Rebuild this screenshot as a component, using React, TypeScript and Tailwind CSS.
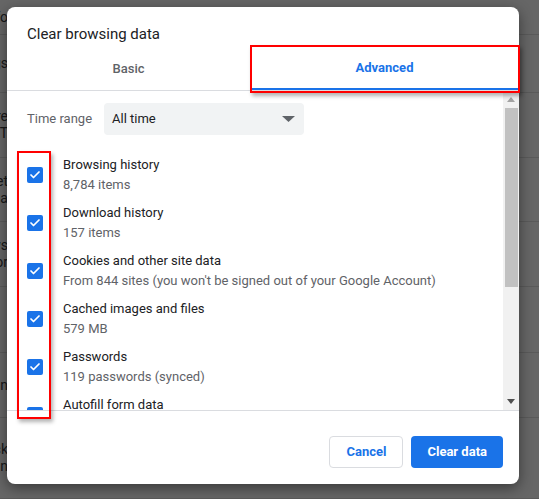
import { Check } from "lucide-react";

// Settings rows sitting behind the dialog; only the tail of each label shows
const pageRows = [
  { h: "h-[35px]", lines: ["Info"] },
  { h: "h-[58px]", lines: ["Settings"] },
  { h: "h-[65px]", lines: ["Privacy and secure", "SITE AUDIT"] },
  { h: "h-[64px]", lines: ["Reset", "Manage sites china"] },
  { h: "h-[65px]", lines: ["Browse windows", "Keep tabs for editor"] },
  { h: "h-[66px]", lines: [] },
  { h: "h-[65px]", lines: ["Sign In"] },
  { h: "flex-1", lines: ["Quick check", "Logged In"] },
];

const dataTypes = [
  { title: "Browsing history", detail: "8,784 items" },
  { title: "Download history", detail: "157 items" },
  {
    title: "Cookies and other site data",
    detail: "From 844 sites (you won't be signed out of your Google Account)",
  },
  { title: "Cached images and files", detail: "579 MB" },
  { title: "Passwords", detail: "119 passwords (synced)" },
  { title: "Autofill form data", detail: "3 addresses, 12 other suggestions" },
  { title: "Site settings", detail: "12 sites" },
];

function Checkbox() {
  return (
    <div className="flex h-4 w-4 shrink-0 items-center justify-center rounded-[2px] bg-[#1a73e8]">
      <Check className="h-3 w-3 text-white" strokeWidth={3.5} />
    </div>
  );
}

function Scrollbar() {
  return (
    <div className="flex w-[16px] shrink-0 flex-col items-center bg-[#f1f1f1]">
      <div className="flex h-[17px] items-center justify-center">
        <svg width="8" height="5" viewBox="0 0 8 5">
          <path d="M4 0 L8 5 L0 5 Z" fill="#a3a3a3" />
        </svg>
      </div>
      <div className="h-[179px] w-[13px] bg-[#c1c1c1]" />
      <div className="flex-1" />
      <div className="flex h-[17px] items-center justify-center">
        <svg width="8" height="5" viewBox="0 0 8 5">
          <path d="M0 0 L8 0 L4 5 Z" fill="#505050" />
        </svg>
      </div>
    </div>
  );
}

export default function App() {
  return (
    <div className="relative h-[499px] w-[539px] overflow-hidden bg-white font-['Roboto',sans-serif]">
      {/* Page underneath */}
      <div className="flex h-full flex-col">
        {pageRows.map((row, i) => (
          <div
            key={i}
            className={`${row.h} flex flex-col justify-center border-b border-[#e0e0e0]`}
          >
            {row.lines.map((line) => (
              <div
                key={line}
                className="flex w-[8px] justify-end overflow-hidden whitespace-nowrap text-[14px] leading-[17px] text-[#3c4043]"
              >
                <span>{line}</span>
              </div>
            ))}
          </div>
        ))}
      </div>

      <div className="absolute inset-0 bg-black/60" />

      {/* Clear browsing data dialog */}
      <div className="absolute left-[7px] top-[7px] flex h-[477px] w-[512px] flex-col overflow-hidden rounded-lg bg-white shadow-[0_4px_14px_rgba(0,0,0,0.45)]">
        <div className="h-[41px] px-5 pt-[17px] text-[15px] leading-5 text-[#202124]">
          Clear browsing data
        </div>

        <div className="flex h-[43px] border-b border-[#dadce0] text-[13px] font-medium">
          <div className="flex w-[243px] items-center justify-center text-[#5f6368]">
            Basic
          </div>
          <div className="flex flex-1 items-center justify-center border-b-2 border-[#1a73e8] font-bold text-[#1a73e8]">
            Advanced
          </div>
        </div>

        <div className="flex h-[319px]">
          <div className="flex-1 overflow-hidden">
            <div className="flex items-center pl-5 pt-3">
              <div className="w-[77px] text-[13px] text-[#5f6368]">Time range</div>
              <div className="flex h-8 w-[200px] items-center justify-between rounded bg-[#f1f3f4] pl-2 pr-[9px] text-[13px] text-[#202124]">
                <span>All time</span>
                <svg width="13" height="6" viewBox="0 0 13 6">
                  <path d="M0 0 L13 0 L6.5 6 Z" fill="#5f6368" />
                </svg>
              </div>
            </div>

            <div className="pt-[16px]">
              {dataTypes.map((item) => (
                <div key={item.title} className="flex h-12 items-center gap-5 pl-5">
                  <Checkbox />
                  <div className="text-[13px] leading-5">
                    <div className="text-[#202124]">{item.title}</div>
                    <div className="text-[#5f6368]">{item.detail}</div>
                  </div>
                </div>
              ))}
            </div>
          </div>
          <Scrollbar />
        </div>

        <div className="flex flex-1 items-start justify-end gap-2 border-t border-[#dadce0] pr-4 pt-[25px] text-[13px] font-bold">
          <button className="h-8 rounded border border-[#dadce0] bg-white px-4 text-[#1a73e8]">
            Cancel
          </button>
          <button className="h-8 rounded bg-[#1a73e8] px-4 text-white">Clear data</button>
        </div>
      </div>

      {/* Red annotation frames */}
      <div className="absolute left-[250px] top-[45px] h-[48px] w-[270px] border-2 border-[#f00] shadow-[2px_3px_4px_rgba(0,0,0,0.3)]" />
      <div className="absolute left-[17px] top-[151px] h-[268px] w-[34px] border-2 border-[#f00] shadow-[2px_3px_4px_rgba(0,0,0,0.3)]" />
    </div>
  );
}
